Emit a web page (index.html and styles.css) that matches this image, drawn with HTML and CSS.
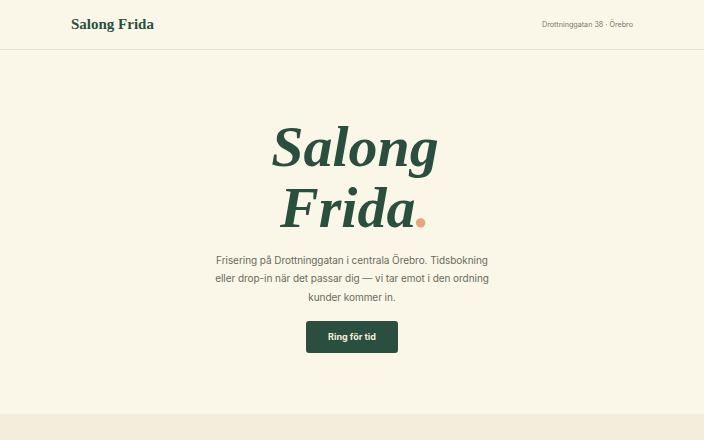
FILE: index.html
```html
<!DOCTYPE html>
<html lang="sv">
<head>
    <meta charset="UTF-8">
    <meta name="viewport" content="width=device-width, initial-scale=1.0">
    <title>Salong Frida – Frisör i Örebro</title>
    <link rel="stylesheet" href="styles.css">
</head>
<body>
    <header class="site-header">
        <div class="wrap header-inner">
            <a class="logo" href="#">Salong Frida</a>
            <span class="address">Drottninggatan 38 · Örebro</span>
        </div>
    </header>

    <!-- Hero -->
    <section class="hero">
        <h1 class="hero-title">Salong<br>Frida<span class="dot">.</span></h1>
        <p class="hero-text">Frisering på Drottninggatan i centrala Örebro. Tidsbokning eller drop-in när det passar dig — vi tar emot i den ordning kunder kommer in.</p>
        <a class="btn" href="#">Ring för tid</a>
    </section>

    <section class="next"></section>
</body>
</html>
```

FILE: styles.css
```css
:root {
    --bg: #faf7e9;
    --bg-alt: #f4eddb;
    --green: #2a4f3e;
    --text: #6a6a5c;
    --line: #e6e2d2;
    --accent: #e9a47f;
}

* {
    box-sizing: border-box;
}

body {
    margin: 0;
    background: var(--bg);
    color: var(--text);
    font-family: Inter, "Open Sans", sans-serif;
}

.wrap {
    max-width: 562px;
    margin: 0 auto;
}

.site-header {
    border-bottom: 1px solid var(--line);
}

.header-inner {
    display: flex;
    justify-content: space-between;
    align-items: center;
    height: 49px;
}

.logo {
    font-family: "Liberation Serif", serif;
    font-weight: 700;
    font-size: 15px;
    color: var(--green);
    text-decoration: none;
}

.address {
    font-size: 7.2px;
    color: #77776a;
}

.hero {
    display: flex;
    flex-direction: column;
    align-items: center;
    text-align: center;
    padding: 66px 0 60px;
    height: 364px;
}

.hero-title {
    margin: 0;
    padding-left: 6px;
    font-family: "Liberation Serif", serif;
    font-style: italic;
    font-weight: 700;
    font-size: 58px;
    line-height: 61px;
    color: var(--green);
}

.dot {
    color: var(--accent);
}

.hero-text {
    max-width: 282px;
    margin: 13px 0 15px;
    font-size: 10px;
    letter-spacing: -0.05px;
    line-height: 18.3px;
}

.btn {
    display: inline-block;
    width: 92px;
    padding: 10px 0;
    background: var(--green);
    color: #f3efdc;
    border-radius: 3px;
    font-size: 9px;
    font-weight: 700;
    text-decoration: none;
    line-height: 12px;
}

.next {
    background: var(--bg-alt);
    height: 40px;
}
```
